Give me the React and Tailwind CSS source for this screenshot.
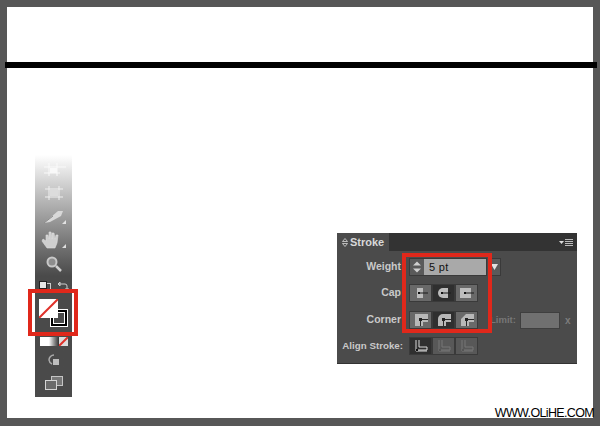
import React from "react";

const labelFont = "font-['Liberation_Sans',sans-serif]";

const CapIcon = ({ type }) => (
  <svg width="14" height="12" viewBox="0 0 14 12">
    {type === "butt" && <rect x="3" y="1" width="6" height="10" fill="#bdbdbd" />}
    {type === "round" && <path d="M11 1H6a5 5 0 0 0 0 10h5z" fill="#bdbdbd" />}
    {type === "square" && <rect x="0" y="1" width="11" height="10" fill="#bdbdbd" />}
    <path d="M5 6h9" stroke="#1c1c1c" strokeWidth="1" />
    <rect x="4" y="5" width="2" height="2" fill="#111" />
  </svg>
);

const CornerIcon = ({ type }) => {
  const outer = {
    miter: "M1 13V1h13v8H9v4z",
    round: "M1 13V6a5 5 0 0 1 5-5h8v8H9v4z",
    bevel: "M1 13V6l5-5h8v8H9v4z",
  };
  return (
    <svg width="14" height="14" viewBox="0 0 14 14">
      <path d={outer[type]} fill="#b8b8b8" />
      <path d="M6.500 13V6.500H14" fill="none" stroke="#2a2a2a" strokeWidth="1" />
      <rect x="5" y="5" width="3" height="3" fill="#222" />
    </svg>
  );
};

const AlignIcon = ({ active }) => {
  const c = active ? "#d8d8d8" : "#767676";
  return (
    <svg width="14" height="14" viewBox="0 0 14 14">
      <path d="M2 1v11h11" fill="none" stroke={c} strokeWidth="1" />
      <path d="M5 1v7h8v3H4" fill="none" stroke={c} strokeWidth="1" />
      <rect x="2" y="10" width="2" height="2" fill={active ? "#111" : "#555"} />
    </svg>
  );
};

const IconButton = ({ children, pressed, disabled }) => (
  <div
    className={`flex h-[18px] w-[23px] items-center justify-center border border-[#3a3a3a] ${
      pressed ? "bg-[#2f2f2f]" : disabled ? "bg-[#585858]" : "bg-[#696969]"
    }`}
  >
    {children}
  </div>
);

const Row = ({ label, width, gap = "ml-[8px]", size = "text-[10.5px]", children, className = "" }) => (
  <div className={`flex items-center ${className}`}>
    <span
      className={`${labelFont} ${size} whitespace-nowrap text-right font-bold text-[#c9c9c9]`}
      style={{ width }}
    >
      {label}
    </span>
    <div className={`${gap} flex items-center`}>{children}</div>
  </div>
);

const Toolbar = () => (
  <div className="relative mt-[88px] flex h-[242px] w-[37px] flex-col items-center bg-linear-to-b from-white to-[#4a4a4a] to-50%">
    {/* faded tools at the top */}
    <svg className="mt-[8px]" width="26" height="13" viewBox="0 0 26 13">
      <path d="M8 0v13M16 0v13M3 4h22M3 10h16" stroke="#fafafa" strokeWidth="1" fill="none" />
      <rect x="9" y="5" width="7" height="5" fill="#f9f9f9" />
    </svg>
    <svg className="mt-[10px]" width="20" height="14" viewBox="0 0 20 14">
      <path d="M1 3h18M1 11h18M5 0v14M15 0v14" stroke="#f0f0f0" strokeWidth="1" />
      <rect x="6" y="4" width="8" height="6" fill="#dcdcdc" />
    </svg>
    <svg className="mt-[9px]" width="26" height="16" viewBox="0 0 26 16">
      <path d="M3 14 17 2h5l-2 5-11 6z" fill="#d8d8d8" />
      <path d="M3 14 12 7" stroke="#8a8a8a" strokeWidth="1" />
      <path d="M25 11v4h-4z" fill="#e2e2e2" />
    </svg>
    <svg className="mt-[6px]" width="26" height="18" viewBox="0 0 26 18">
      <path
        d="M6 17 1 10l1-2 3 2 0-6 2 0 1 4V1h2l1 7V2h2l1 6 1-4h2l-1 8-2 5z"
        fill="#cfcfcf"
        stroke="#dedede"
        strokeWidth=".6"
      />
      <path d="M25 13v4h-4z" fill="#dedede" />
    </svg>
    <svg className="mt-[7px]" width="18" height="16" viewBox="0 0 18 16">
      <circle cx="7" cy="6" r="4.500" fill="#8d8d8d" stroke="#c8c8c8" strokeWidth="2" />
      <path d="m11 10 5 5" stroke="#cfcfcf" strokeWidth="2.500" />
    </svg>
    {/* default fill + swap */}
    <div className="mt-[8px] flex w-[31px] items-start justify-between">
      <svg width="14" height="12" viewBox="0 0 14 12">
        <rect x="5.500" y="3.500" width="7" height="7" fill="none" stroke="#ccc" />
        <rect x="1.500" y="1.500" width="7" height="7" fill="#e6e6e6" stroke="#222" />
      </svg>
      <svg width="12" height="12" viewBox="0 0 12 12">
        <path d="M2 4h6a2 2 0 0 1 2 2v4M1 4l2-2v4zM10 11l-2-2h4z" stroke="#ccc" fill="none" />
      </svg>
    </div>
    {/* fill and stroke swatches */}
    <div className="relative mt-[7px] h-[29px] w-[31px]">
      <div className="absolute bottom-[1px] right-[1px] flex h-[18px] w-[18px] items-center justify-center border border-white bg-black">
        <div className="h-[12px] w-[12px] border border-white bg-[#4a4a4a]" />
      </div>
      <svg className="absolute left-[1px] top-0" width="19" height="19" viewBox="0 0 19 19">
        <rect width="19" height="19" fill="#fff" />
        <path d="M0 19 19 0" stroke="#e0312a" strokeWidth="2" />
      </svg>
    </div>
    {/* colour modes */}
    <div className="mt-[9px] flex h-[9px] w-[28px]">
      <div className="w-[9px] bg-white" />
      <div className="w-[10px] bg-linear-to-r from-white to-[#333]" />
      <svg width="9" height="9" viewBox="0 0 9 9">
        <rect width="9" height="9" fill="#ddd" />
        <path d="M0 9 9 0" stroke="#e0312a" strokeWidth="2" />
      </svg>
    </div>
    <svg className="mt-[8px]" width="12" height="12" viewBox="0 0 12 12">
      <path d="M6 1a5 5 0 0 0-5 5 5 5 0 0 0 3 4" fill="none" stroke="#aaa" strokeWidth="1.500" />
      <rect x="5" y="5" width="6" height="6" fill="#bdbdbd" />
    </svg>
    <svg className="mt-[10px]" width="18" height="14" viewBox="0 0 18 14">
      <rect x="6.500" y="0.500" width="11" height="9" fill="#777" stroke="#c4c4c4" />
      <rect x="0.500" y="4.500" width="11" height="9" fill="#6a6a6a" stroke="#d4d4d4" />
    </svg>
    {/* red highlight */}
    <div className="absolute left-[-7px] top-[134px] h-[47px] w-[50px] border-4 border-[#e0281b]" />
  </div>
);

const StrokePanel = () => (
  <div className="relative ml-[265px] mt-[166px] h-[131px] w-[240px] border-b border-[#333] bg-[#4b4b4b]">
    <div className="flex h-[18px] justify-between bg-[#333333]">
      <div className={`${labelFont} flex w-[52px] items-center gap-[2px] bg-[#4b4b4b] pl-[5px] text-[11px] font-bold text-[#d8d8d8]`}>
        <svg width="6" height="9" viewBox="0 0 6 9">
          <path d="M3 .5 5.500 3.500H.5zM3 8.500.5 5.500h5z" fill="none" stroke="#d8d8d8" strokeWidth=".8" />
        </svg>
        Stroke
      </div>
      <svg className="mr-[3px] mt-[5px]" width="16" height="9" viewBox="0 0 16 9">
        <path d="M1 3h5L3.500 6z" fill="#ddd" />
        <path d="M7 1.500h8M7 3.500h8M7 5.500h8M7 7.500h8" stroke="#bbb" />
      </svg>
    </div>

    <Row label="Weight" width={64} className="mt-[7px]">
      <div className="flex h-[18px] w-[78px] border border-[#3a3a3a]">
        <svg width="14" height="16" viewBox="0 0 14 16" className="bg-[#5a5a5a]">
          <path d="M7 2.500 11 6.500H3zM7 13.500 3 9.500h8z" fill="#d0d0d0" />
        </svg>
        <div className={`${labelFont} flex-1 bg-[#a9a9a9] pl-[5px] text-[11px] leading-[16px] tracking-[0.3px] text-[#111]`}>5 pt</div>
      </div>
      <div className="ml-[1px] flex h-[18px] w-[13px] items-center justify-center border border-[#3a3a3a] bg-[#5a5a5a]">
        <svg width="7" height="6" viewBox="0 0 7 6">
          <path d="M0 0h7L3.500 6z" fill="#e2e2e2" />
        </svg>
      </div>
    </Row>

    <Row label="Cap" width={64} className="mt-[8px]">
      <IconButton><CapIcon type="butt" /></IconButton>
      <IconButton pressed><CapIcon type="round" /></IconButton>
      <IconButton><CapIcon type="square" /></IconButton>
    </Row>

    <div className="mt-[9px] flex items-center">
      <Row label="Corner" width={64}>
        <IconButton><CornerIcon type="miter" /></IconButton>
        <IconButton pressed><CornerIcon type="round" /></IconButton>
        <IconButton><CornerIcon type="bevel" /></IconButton>
      </Row>
      <span className={`${labelFont} ml-[12px] w-[24px] whitespace-nowrap text-[9.500px] font-bold text-[#777]`}>Limit:</span>
      <div className="ml-[6px] h-[17px] w-[40px] border border-[#3f3f3f] bg-[#707070]" />
      <span className={`${labelFont} ml-[5px] text-[10px] font-bold text-[#7c7c7c]`}>x</span>
    </div>

    <Row label="Align Stroke:" width={66} gap="ml-[6px]" size="text-[9.750px]" className="mt-[8px]">
      <IconButton pressed><AlignIcon active /></IconButton>
      <IconButton disabled><AlignIcon /></IconButton>
      <IconButton disabled><AlignIcon /></IconButton>
    </Row>

    {/* red highlight */}
    <div className="absolute left-[65px] top-[20px] h-[80px] w-[90px] border-4 border-[#e0281b]" />
  </div>
);

export default function App() {
  return (
    <div className="relative h-[426px] w-[600px] overflow-hidden bg-[#575757] pb-[8px] pl-[7px] pr-[7px] pt-[7px]">
      <div className="h-full w-full bg-white">
        <div className="-ml-[2px] -mr-[4px] h-[6px] translate-y-[55px] bg-black" />
        <div className="flex pl-[28px] pt-[54px]">
          <Toolbar />
          <StrokePanel />
        </div>
      </div>
      <span className="absolute bottom-[6px] right-[6px] font-['Liberation_Sans',sans-serif] text-[12.500px] leading-[14px] tracking-[-0.65px] text-black">
        WWW.OLiHE.COM
      </span>
    </div>
  );
}
